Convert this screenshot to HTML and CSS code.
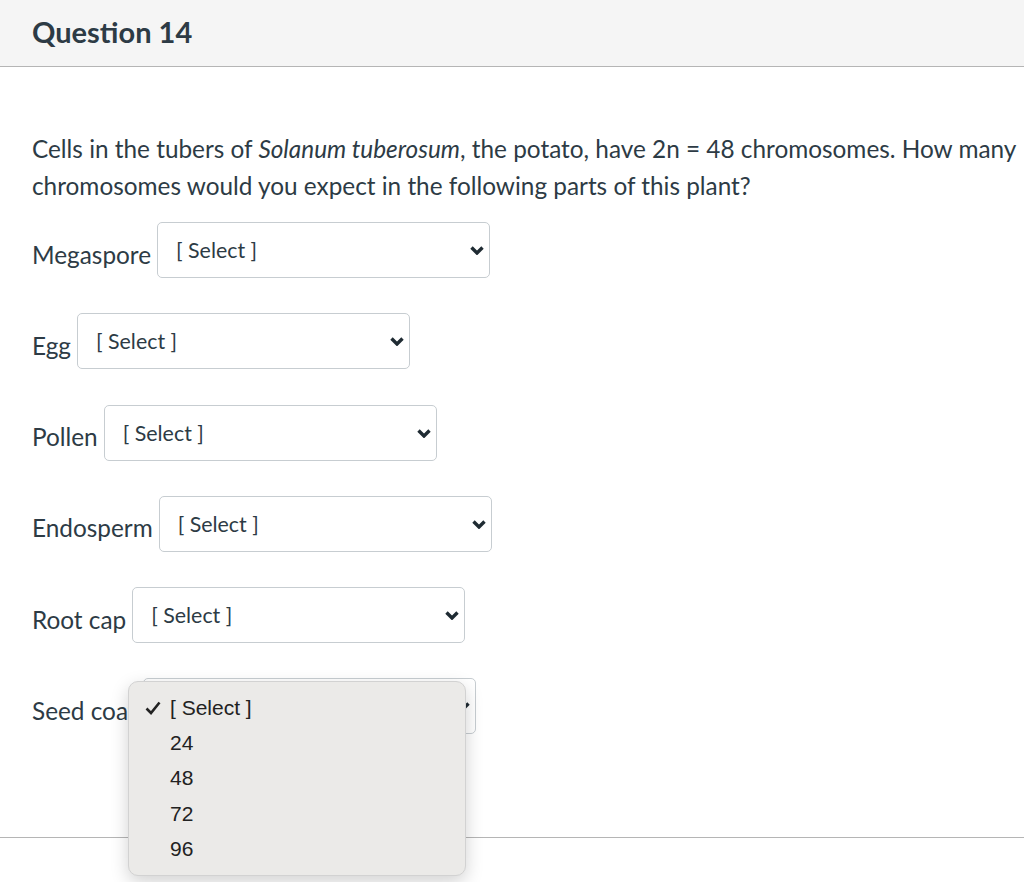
FILE: index.html
```html
<!DOCTYPE html>
<html lang="en">
<head>
    <meta charset="UTF-8">
    <meta name="viewport" content="width=device-width, initial-scale=1.0">
    <title>Question 14</title>
    <link rel="stylesheet" href="styles.css">
</head>
<body>
    <div class="question">
        <!-- header -->
        <div class="question-header">Question 14</div>

        <div class="question-body">
            <p class="question-text">Cells in the tubers of <em>Solanum tuberosum</em>, the potato, have 2n = 48 chromosomes. How many chromosomes would you expect in the following parts of this plant?</p>

            <div class="answer-row">
                <span class="answer-label">Megaspore</span>
                <div class="fake-select">[ Select ]<svg class="chevron" viewBox="0 0 14 9"><path d="M1.5 1.5 L7 7 L12.5 1.5"/></svg></div>
            </div>

            <div class="answer-row">
                <span class="answer-label">Egg</span>
                <div class="fake-select">[ Select ]<svg class="chevron" viewBox="0 0 14 9"><path d="M1.5 1.5 L7 7 L12.5 1.5"/></svg></div>
            </div>

            <div class="answer-row">
                <span class="answer-label">Pollen</span>
                <div class="fake-select">[ Select ]<svg class="chevron" viewBox="0 0 14 9"><path d="M1.5 1.5 L7 7 L12.5 1.5"/></svg></div>
            </div>

            <div class="answer-row">
                <span class="answer-label">Endosperm</span>
                <div class="fake-select">[ Select ]<svg class="chevron" viewBox="0 0 14 9"><path d="M1.5 1.5 L7 7 L12.5 1.5"/></svg></div>
            </div>

            <div class="answer-row">
                <span class="answer-label">Root cap</span>
                <div class="fake-select">[ Select ]<svg class="chevron" viewBox="0 0 14 9"><path d="M1.5 1.5 L7 7 L12.5 1.5"/></svg></div>
            </div>

            <div class="answer-row open">
                <span class="answer-label">Seed coat</span>
                <div class="fake-select">[ Select ]<svg class="chevron" viewBox="0 0 14 9"><path d="M1.5 1.5 L7 7 L12.5 1.5"/></svg></div>

                <!-- opened option list -->
                <ul class="option-menu">
                    <li class="selected"><svg class="check" viewBox="0 0 16 14"><path d="M1.5 7.5 L6 12 L14.5 1.5"/></svg>[ Select ]</li>
                    <li>24</li>
                    <li>48</li>
                    <li>72</li>
                    <li>96</li>
                </ul>
            </div>
        </div>

        <div class="question-footer"></div>
    </div>
</body>
</html>
```

FILE: styles.css
```css
body {
    margin: 0;
    padding: 0;
    min-height: 882px;
    background: #fff;
    font-family: Lato, "Open Sans", sans-serif;
    color: #2d3b45;
}

.question-header {
    height: 66px;
    background: #f5f5f5;
    border-bottom: 1px solid #b5b5b5;
    padding-left: 32px;
    font-size: 29px;
    font-weight: bold;
    line-height: 64px;
}

.question-body {
    padding: 63px 4px 0 32px;
}

.question-text {
    margin: 0 0 18px 0;
    font-size: 24.35px;
    line-height: 37px;
}

.answer-row {
    position: relative;
    display: flex;
    align-items: center;
    gap: 6px;
    margin-bottom: 35.3px;
}

.answer-label {
    font-size: 24.35px;
    padding-top: 8px;
}

.fake-select {
    position: relative;
    box-sizing: border-box;
    width: 333px;
    height: 56px;
    border: 1px solid #c7cdd1;
    border-radius: 5px;
    padding-left: 18px;
    font-size: 21.4px;
    line-height: 54px;
    background: #fff;
}

.fake-select .chevron {
    position: absolute;
    right: 5px;
    top: 23px;
    width: 14px;
    height: 9px;
    fill: none;
    stroke: #1f2b33;
    stroke-width: 3.4;
}

.option-menu {
    position: absolute;
    z-index: 2;
    left: 96px;
    top: 3px;
    box-sizing: border-box;
    width: 338px;
    height: 195px;
    margin: 0;
    padding: 7.5px 0 0 0;
    list-style: none;
    background: #ebeae8;
    border: 1px solid #d2d2d2;
    border-radius: 10px;
    box-shadow: 0 6px 18px rgba(0, 0, 0, 0.18);
    font-family: "Liberation Sans", Arial, sans-serif;
    font-size: 21px;
    color: #222;
}

.option-menu li {
    position: relative;
    height: 35.2px;
    line-height: 35px;
    padding-left: 41px;
}

.option-menu .check {
    position: absolute;
    left: 16px;
    top: 11px;
    width: 16px;
    height: 14px;
    fill: none;
    stroke: #222;
    stroke-width: 2.6;
}

.question-footer {
    margin-top: 103px;
    border-top: 1px solid #b5b5b5;
}
```
